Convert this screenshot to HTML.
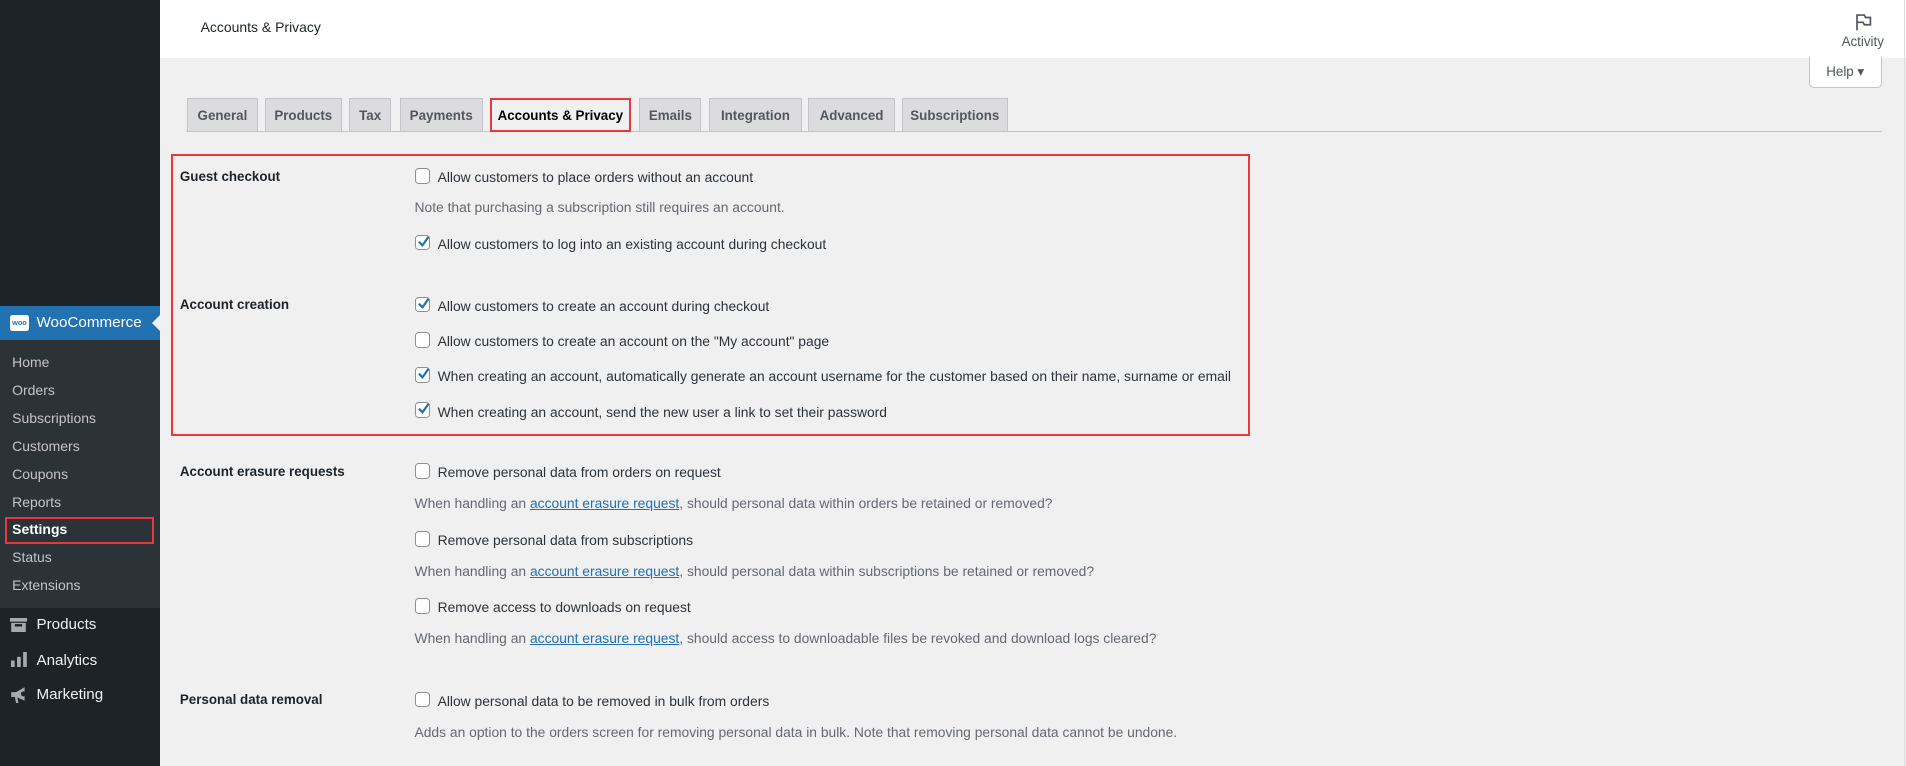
<!DOCTYPE html>
<html><head><meta charset="utf-8"><style>
html,body{margin:0;padding:0;}
html{width:1906px;height:766px;overflow:hidden;background:#f0f0f1;}
body{zoom:1.21556;width:1568px;height:630px;position:relative;font-family:"Liberation Sans",sans-serif;font-size:12px;color:#1d2327;background:#f0f0f1;overflow:hidden;}
.a{position:absolute;white-space:nowrap;}
#side{position:absolute;left:0;top:0;width:132px;height:630px;background:#1d2327;}
#sub{position:absolute;left:0;top:280px;width:132px;height:220px;background:#2c3338;}
.si{position:absolute;left:10px;font-size:11.5px;color:#c3c4c7;}
.mi{position:absolute;left:30px;font-size:12.5px;color:#f0f0f1;}
.tab{position:absolute;top:81px;height:27px;background:#dcdcde;border:1px solid #c3c4c7;border-bottom:none;box-sizing:border-box;font-size:11px;font-weight:bold;color:#50575e;text-align:center;line-height:28px;}
.lbl{position:absolute;left:148px;font-weight:bold;font-size:11px;color:#1d2327;}
.cb{position:absolute;left:341px;width:13px;height:13px;box-sizing:border-box;border:1px solid #8c8f94;border-radius:3px;background:#fff;}
.txt{position:absolute;left:360px;font-size:11.4px;color:#2c3338;white-space:nowrap;margin-top:1px;}
.desc{position:absolute;left:341px;font-size:11.4px;color:#646970;white-space:nowrap;margin-top:1px;}
.desc u{color:#2271b1;}
</style></head><body>
<div id="side"></div>
<div class="a" style="left:0;top:252px;width:132px;height:28px;background:#2271b1;"></div>
<div class="a" style="left:125px;top:259px;width:0;height:0;border-top:7px solid transparent;border-bottom:7px solid transparent;border-right:7px solid #f0f0f1;"></div>
<div class="a" style="left:8px;top:259px;width:16px;height:13px;background:#fff;border-radius:2px;font-size:6px;font-weight:bold;color:#2271b1;text-align:center;line-height:13px;">woo</div>
<div class="mi" style="left:30px;top:258px;color:#fff;font-size:12.5px;">WooCommerce</div>
<div id="sub"></div>
<div class="si" style="top:291px">Home</div>
<div class="si" style="top:314px">Orders</div>
<div class="si" style="top:337px">Subscriptions</div>
<div class="si" style="top:360px">Customers</div>
<div class="si" style="top:383px">Coupons</div>
<div class="si" style="top:406px">Reports</div>
<div class="si" style="top:429px;color:#fff;font-weight:bold;">Settings</div>
<div class="a" style="left:4px;top:425px;width:119px;height:19px;border:2px solid #e8383d;"></div>
<div class="si" style="top:452px">Status</div>
<div class="si" style="top:475px">Extensions</div>
<svg class="a" style="left:8px;top:508px" width="14" height="12"><rect x="0" y="0" width="14" height="3" fill="#a7aaad"/><rect x="1" y="4" width="12" height="8" fill="#a7aaad"/><rect x="4" y="5" width="6" height="2" fill="#1d2327"/></svg>
<div class="mi" style="top:507px">Products</div>
<svg class="a" style="left:9px;top:536px" width="13" height="13"><rect x="0" y="7" width="3" height="6" fill="#a7aaad"/><rect x="5" y="4" width="3" height="9" fill="#a7aaad"/><rect x="10" y="0" width="3" height="13" fill="#a7aaad"/></svg>
<div class="mi" style="top:536px">Analytics</div>
<svg class="a" style="left:8px;top:564px" width="15" height="14"><path d="M1 5h4l7-4v11l-7-3H1z" fill="#a7aaad"/><path d="M4 9l1 5h2l-1-5z" fill="#a7aaad"/><circle cx="11" cy="6.5" r="2" fill="#1d2327"/></svg>
<div class="mi" style="top:564px">Marketing</div>

<div class="a" style="left:132px;top:0;width:1436px;height:48px;background:#fff;"></div>
<div class="a" style="left:165px;top:16px;font-size:11.5px;color:#1d2327;">Accounts &amp; Privacy</div>
<svg class="a" style="left:1525px;top:10px" width="16" height="16"><path d="M2.5 15V2.5h6l1 2h4v6h-5l-1-2h-5" fill="none" stroke="#50575e" stroke-width="1.4"/></svg>
<div class="a" style="left:1515px;top:28px;font-size:11px;color:#50575e;">Activity</div>
<div class="a" style="left:1566px;top:0;width:1px;height:630px;background:#dcdcde;"></div>
<div class="a" style="left:1488px;top:47px;width:60px;height:25px;box-sizing:border-box;background:#fff;border:1px solid #c3c4c7;border-top:none;border-radius:0 0 4px 4px;font-size:11px;color:#50575e;text-align:center;line-height:24px;">Help &#9662;</div>

<div class="a" style="left:153px;top:108px;width:1395px;height:1px;background:#c3c4c7;"></div>
<div class="tab" style="left:154px;width:58px">General</div>
<div class="tab" style="left:218px;width:63px">Products</div>
<div class="tab" style="left:287px;width:35px">Tax</div>
<div class="tab" style="left:329px;width:68px">Payments</div>
<div class="tab" style="left:403px;width:116px;height:28px;background:#f0f0f1;color:#000;border:2px solid #e8383d;line-height:26px;">Accounts &amp; Privacy</div>
<div class="tab" style="left:526px;width:51px">Emails</div>
<div class="tab" style="left:583px;width:77px">Integration</div>
<div class="tab" style="left:665px;width:71px">Advanced</div>
<div class="tab" style="left:742px;width:87px">Subscriptions</div>

<div class="a" style="left:141px;top:127px;width:884px;height:228px;border:2px solid #e8383d;"></div>

<div class="lbl" style="top:139px">Guest checkout</div>
<div class="cb" style="top:138px"></div><div class="txt" style="top:138px">Allow customers to place orders without an account</div>
<div class="desc" style="top:163px">Note that purchasing a subscription still requires an account.</div>
<div class="cb" style="top:193px"></div><div class="txt" style="top:193px">Allow customers to log into an existing account during checkout</div>

<div class="lbl" style="top:244px">Account creation</div>
<div class="cb" style="top:244px"></div><div class="txt" style="top:244px">Allow customers to create an account during checkout</div>
<div class="cb" style="top:273px"></div><div class="txt" style="top:273px">Allow customers to create an account on the "My account" page</div>
<div class="cb" style="top:302px"></div><div class="txt" style="top:302px">When creating an account, automatically generate an account username for the customer based on their name, surname or email</div>
<div class="cb" style="top:331px"></div><div class="txt" style="top:331px">When creating an account, send the new user a link to set their password</div>

<div class="lbl" style="top:382px">Account erasure requests</div>
<div class="cb" style="top:381px"></div><div class="txt" style="top:381px">Remove personal data from orders on request</div>
<div class="desc" style="top:406px">When handling an <u>account erasure request</u>, should personal data within orders be retained or removed?</div>
<div class="cb" style="top:437px"></div><div class="txt" style="top:437px">Remove personal data from subscriptions</div>
<div class="desc" style="top:462px">When handling an <u>account erasure request</u>, should personal data within subscriptions be retained or removed?</div>
<div class="cb" style="top:492px"></div><div class="txt" style="top:492px">Remove access to downloads on request</div>
<div class="desc" style="top:517px">When handling an <u>account erasure request</u>, should access to downloadable files be revoked and download logs cleared?</div>

<div class="lbl" style="top:569px">Personal data removal</div>
<div class="cb" style="top:569px"></div><div class="txt" style="top:569px">Allow personal data to be removed in bulk from orders</div>
<div class="desc" style="top:595px">Adds an option to the orders screen for removing personal data in bulk. Note that removing personal data cannot be undone.</div>

<svg class="a" style="left:343px;top:193px" width="11" height="11"><path d="M1.5 5.5l3 3 5-7" fill="none" stroke="#2271b1" stroke-width="1.8"/></svg>
<svg class="a" style="left:343px;top:244px" width="11" height="11"><path d="M1.5 5.5l3 3 5-7" fill="none" stroke="#2271b1" stroke-width="1.8"/></svg>
<svg class="a" style="left:343px;top:302px" width="11" height="11"><path d="M1.5 5.5l3 3 5-7" fill="none" stroke="#2271b1" stroke-width="1.8"/></svg>
<svg class="a" style="left:343px;top:331px" width="11" height="11"><path d="M1.5 5.5l3 3 5-7" fill="none" stroke="#2271b1" stroke-width="1.8"/></svg>
</body></html>
